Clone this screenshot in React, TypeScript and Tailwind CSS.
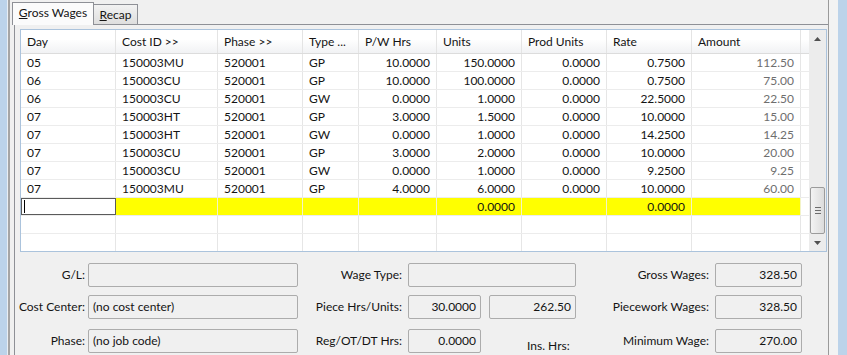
const columns = [
    { label: 'Day', width: 'w-[95px]', align: 'left' },
    { label: 'Cost ID >>', width: 'w-[102px]', align: 'left' },
    { label: 'Phase >>', width: 'w-[85px]', align: 'left' },
    { label: 'Type ...', width: 'w-[56px]', align: 'left' },
    { label: 'P/W Hrs', width: 'w-[78px]', align: 'right' },
    { label: 'Units', width: 'w-[85px]', align: 'right' },
    { label: 'Prod Units', width: 'w-[85px]', align: 'right' },
    { label: 'Rate', width: 'w-[85px]', align: 'right' },
    { label: 'Amount', width: 'w-[109px]', align: 'right' },
];

const rows = [
    ['05', '150003MU', '520001', 'GP', '10.0000', '150.0000', '0.0000', '0.7500', '112.50'],
    ['06', '150003CU', '520001', 'GP', '10.0000', '100.0000', '0.0000', '0.7500', '75.00'],
    ['06', '150003CU', '520001', 'GW', '0.0000', '1.0000', '0.0000', '22.5000', '22.50'],
    ['07', '150003HT', '520001', 'GP', '3.0000', '1.5000', '0.0000', '10.0000', '15.00'],
    ['07', '150003HT', '520001', 'GW', '0.0000', '1.0000', '0.0000', '14.2500', '14.25'],
    ['07', '150003CU', '520001', 'GP', '3.0000', '2.0000', '0.0000', '10.0000', '20.00'],
    ['07', '150003CU', '520001', 'GW', '0.0000', '1.0000', '0.0000', '9.2500', '9.25'],
    ['07', '150003MU', '520001', 'GP', '4.0000', '6.0000', '0.0000', '10.0000', '60.00'],
];

const editRow = ['', '', '', '', '', '0.0000', '', '0.0000', ''];

function Cell({ col, children, className = '' }: { col: number; children?: React.ReactNode; className?: string }) {
    const c = columns[col];
    return (
        <div
            className={`flex h-full shrink-0 items-center border-r border-[#e6e6e6] px-[6px] ${c.width} ${
                c.align === 'right' ? 'justify-end' : 'justify-start'
            } ${className}`}
        >
            {children}
        </div>
    );
}

function Field({ width, value, align = 'right' }: { width: string; value?: string; align?: 'left' | 'right' }) {
    return (
        <div
            className={`flex h-[24px] shrink-0 items-center rounded-[2px] border border-[#acacac] bg-[#f0f0f0] px-[4px] ${width} ${
                align === 'right' ? 'justify-end' : 'justify-start'
            }`}
        >
            {value}
        </div>
    );
}

function Label({ width, text }: { width: string; text: string }) {
    return <div className={`flex shrink-0 justify-end whitespace-nowrap ${width}`}>{text}</div>;
}

function Arrow({ up }: { up?: boolean }) {
    return (
        <svg width="7" height="4" viewBox="0 0 7 4" className="text-[#505050]">
            <path d={up ? 'M0 4 L3.5 0 L7 4 Z' : 'M0 0 L3.5 4 L7 0 Z'} fill="currentColor" />
        </svg>
    );
}

export default function App() {
    return (
        <div className="flex h-[355px] w-[847px] overflow-hidden bg-[#f0f0f0] font-['Lato',sans-serif] text-[12px] text-[#141414]">
            <div className="w-[7px] shrink-0 bg-[#bcd3ea]" />
            <div className="w-[1px] shrink-0 bg-[#e9eef4]" />
            <div className="w-[2px] shrink-0 bg-[#a5a5a5]" />

            {/* main window area */}
            <div className="flex w-[818px] shrink-0 flex-col">
                <div className="flex h-[24px] items-end pl-[2px]">
                    <div className="relative z-10 -mb-px flex h-[23px] w-[82px] items-center justify-center border border-b-0 border-[#8e9096] bg-[#fbfbfb] pb-[2px]">
                        <span>
                            <span className="underline">G</span>ross Wages
                        </span>
                    </div>
                    <div className="flex h-[20px] w-[44px] items-center justify-center border border-l-0 border-b-0 border-[#8e9096] bg-gradient-to-b from-[#f2f2f2] to-[#dedede]">
                        <span>
                            <span className="underline">R</span>ecap
                        </span>
                    </div>
                </div>

                <div className="ml-[4px] flex flex-1 flex-col border-l border-t border-[#8e9096] pl-[5px] pt-[4px]">
                    {/* grid */}
                    <div className="flex h-[223px] w-[807px] border border-[#abc3dc] bg-white">
                        <div className="flex h-[221px] w-[788px] flex-col overflow-hidden">
                            <div className="flex h-[24px] shrink-0 border-b border-[#dcdcdc] bg-gradient-to-b from-white from-40% to-[#f1f2f4]">
                                {columns.map((c) => (
                                    <div
                                        key={c.label}
                                        className={`flex h-full shrink-0 items-center border-r border-[#e4e4e4] px-[6px] ${c.width}`}
                                    >
                                        {c.label}
                                    </div>
                                ))}
                                <div className="h-full w-[8px] shrink-0" />
                            </div>

                            {rows.map((r, ri) => (
                                <div key={ri} className="flex h-[18px] shrink-0 border-b border-[#ececec]">
                                    {r.map((v, ci) => (
                                        <Cell key={ci} col={ci} className={ci === 8 ? 'text-[#6e6e6e]' : ''}>
                                            {v}
                                        </Cell>
                                    ))}
                                    <div className="h-full w-[8px] shrink-0" />
                                </div>
                            ))}

                            <div className="flex h-[18px] shrink-0 border-b border-[#ececec]">
                                <div className="flex h-full w-[95px] shrink-0 items-center border border-[#5a5a5a] bg-white pl-[2px]">
                                    <div className="h-[13px] w-px bg-black" />
                                </div>
                                {editRow.slice(1).map((v, i) => (
                                    <Cell key={i} col={i + 1} className="border-[#f3f3c8] bg-[#ffff00]">
                                        {v}
                                    </Cell>
                                ))}
                                <div className="h-full w-[8px] shrink-0" />
                            </div>

                            {[0, 1].map((k) => (
                                <div key={k} className="flex h-[18px] shrink-0 border-b border-[#ececec]">
                                    {columns.map((c, ci) => (
                                        <Cell key={ci} col={ci} />
                                    ))}
                                    <div className="h-full w-[8px] shrink-0" />
                                </div>
                            ))}
                        </div>

                        {/* scrollbar */}
                        <div className="flex h-[221px] w-[17px] shrink-0 flex-col items-center bg-[#ececec]">
                            <div className="flex h-[17px] w-full items-center justify-center">
                                <Arrow up />
                            </div>
                            <div className="flex-1" />
                            <div className="flex h-[47px] w-[15px] flex-col items-center justify-center gap-[2px] rounded-[2px] border border-[#9b9b9b] bg-gradient-to-r from-[#f3f3f3] to-[#dcdcdc]">
                                <div className="h-px w-[6px] bg-[#6d6d6d]" />
                                <div className="h-px w-[6px] bg-[#6d6d6d]" />
                                <div className="h-px w-[6px] bg-[#6d6d6d]" />
                            </div>
                            <div className="flex h-[17px] w-full items-center justify-center">
                                <Arrow />
                            </div>
                        </div>
                    </div>

                    {/* fields */}
                    <div className="mt-[11px] flex flex-col gap-[8px]">
                        <div className="flex items-center">
                            <Label width="w-[65px]" text="G/L:" />
                            <div className="ml-[3px]">
                                <Field width="w-[210px]" />
                            </div>
                            <Label width="w-[104px]" text="Wage Type:" />
                            <div className="ml-[6px]">
                                <Field width="w-[168px]" />
                            </div>
                            <Label width="w-[133px]" text="Gross Wages:" />
                            <div className="ml-[6px]">
                                <Field width="w-[87px]" value="328.50" />
                            </div>
                        </div>
                        <div className="flex items-center">
                            <Label width="w-[65px]" text="Cost Center:" />
                            <div className="ml-[3px]">
                                <Field width="w-[210px]" value="(no cost center)" align="left" />
                            </div>
                            <Label width="w-[104px]" text="Piece Hrs/Units:" />
                            <div className="ml-[6px] flex gap-[8px]">
                                <Field width="w-[73px]" value="30.0000" />
                                <Field width="w-[87px]" value="262.50" />
                            </div>
                            <Label width="w-[133px]" text="Piecework Wages:" />
                            <div className="ml-[6px]">
                                <Field width="w-[87px]" value="328.50" />
                            </div>
                        </div>
                        <div className="flex items-center">
                            <Label width="w-[65px]" text="Phase:" />
                            <div className="ml-[3px]">
                                <Field width="w-[210px]" value="(no job code)" align="left" />
                            </div>
                            <Label width="w-[104px]" text="Reg/OT/DT Hrs:" />
                            <div className="ml-[6px]">
                                <Field width="w-[73px]" value="0.0000" />
                            </div>
                            <div className="w-[95px] shrink-0 pl-[46px] pt-[10px]">Ins. Hrs:</div>
                            <Label width="w-[133px]" text="Minimum Wage:" />
                            <div className="ml-[6px]">
                                <Field width="w-[87px]" value="270.00" />
                            </div>
                        </div>
                    </div>
                </div>
            </div>

            <div className="w-[1px] shrink-0 bg-[#9a9a9a]" />
            <div className="w-[9px] shrink-0 bg-[#f3f3f3]" />
            <div className="w-[10px] shrink-0 bg-[#bcd3ea]" />
        </div>
    );
}
